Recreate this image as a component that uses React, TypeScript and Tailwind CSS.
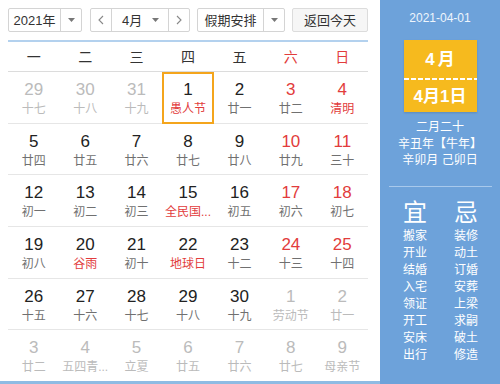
import React from "react";

type Cell = { d: string; l: string; other?: boolean; redNum?: boolean; redL?: boolean; sel?: boolean };

const rows: Cell[][] = [
  [
    { d: "29", l: "十七", other: true },
    { d: "30", l: "十八", other: true },
    { d: "31", l: "十九", other: true },
    { d: "1", l: "愚人节", redL: true, sel: true },
    { d: "2", l: "廿一" },
    { d: "3", l: "廿二", redNum: true },
    { d: "4", l: "清明", redNum: true, redL: true },
  ],
  [
    { d: "5", l: "廿四" },
    { d: "6", l: "廿五" },
    { d: "7", l: "廿六" },
    { d: "8", l: "廿七" },
    { d: "9", l: "廿八" },
    { d: "10", l: "廿九", redNum: true },
    { d: "11", l: "三十", redNum: true },
  ],
  [
    { d: "12", l: "初一" },
    { d: "13", l: "初二" },
    { d: "14", l: "初三" },
    { d: "15", l: "全民国...", redL: true },
    { d: "16", l: "初五" },
    { d: "17", l: "初六", redNum: true },
    { d: "18", l: "初七", redNum: true },
  ],
  [
    { d: "19", l: "初八" },
    { d: "20", l: "谷雨", redL: true },
    { d: "21", l: "初十" },
    { d: "22", l: "地球日", redL: true },
    { d: "23", l: "十二" },
    { d: "24", l: "十三", redNum: true },
    { d: "25", l: "十四", redNum: true },
  ],
  [
    { d: "26", l: "十五" },
    { d: "27", l: "十六" },
    { d: "28", l: "十七" },
    { d: "29", l: "十八" },
    { d: "30", l: "十九" },
    { d: "1", l: "劳动节", other: true },
    { d: "2", l: "廿一", other: true },
  ],
  [
    { d: "3", l: "廿二", other: true },
    { d: "4", l: "五四青...", other: true },
    { d: "5", l: "立夏", other: true },
    { d: "6", l: "廿五", other: true },
    { d: "7", l: "廿六", other: true },
    { d: "8", l: "廿七", other: true },
    { d: "9", l: "母亲节", other: true },
  ],
];

const Arrow = () => (
  <svg width="7" height="4" viewBox="0 0 7 4">
    <path d="M0 0H7L3.5 4Z" fill="#777" />
  </svg>
);

const Chev = ({ dir }: { dir: "l" | "r" }) => (
  <svg width="6" height="10" viewBox="0 0 6 10">
    <path d={dir === "l" ? "M5 1L1 5L5 9" : "M1 1L5 5L1 9"} stroke="#888" strokeWidth="1.1" fill="none" />
  </svg>
);

export default function App() {
  const yi = ["搬家", "开业", "结婚", "入宅", "领证", "开工", "安床", "出行"];
  const ji = ["装修", "动土", "订婚", "安葬", "上梁", "求嗣", "破土", "修造"];
  return (
    <div className="flex w-[500px] h-[384px] bg-white overflow-hidden font-['Liberation_Sans','Noto_Sans_CJK_SC',sans-serif]">
      <div className="w-[380px] h-[384px] flex flex-col pl-2 pr-3 pt-2 border-b-[3px] border-[#8fbbe3]">
        <div className="flex h-6 text-[13px] text-[#333] leading-none">
          <div className="w-[74px] flex border border-[#d4d4d4] rounded-[2px]">
            <div className="w-[52px] flex items-center justify-center border-r border-[#d4d4d4]">2021年</div>
            <div className="flex-1 flex items-center justify-center"><Arrow /></div>
          </div>
          <div className="ml-2 w-[100px] flex border border-[#d4d4d4] rounded-[2px]">
            <div className="w-[21px] flex items-center justify-center border-r border-[#d4d4d4]"><Chev dir="l" /></div>
            <div className="w-[57px] flex items-center justify-between pl-[10px] pr-[9px] border-r border-[#d4d4d4]">
              <span>4月</span>
              <Arrow />
            </div>
            <div className="flex-1 flex items-center justify-center"><Chev dir="r" /></div>
          </div>
          <div className="ml-[7px] w-[88px] flex border border-[#d4d4d4] rounded-[2px]">
            <div className="w-[66px] flex items-center justify-center border-r border-[#d4d4d4]">假期安排</div>
            <div className="flex-1 flex items-center justify-center"><Arrow /></div>
          </div>
          <div className="ml-[7px] w-[76px] flex items-center justify-center border border-[#dcdcdc] bg-[#f6f6f6] rounded-[2px]">返回今天</div>
        </div>
        <div className="mt-2 border-t-2 border-[#b3d1ee]" />
        <div className="grid grid-cols-7 h-[30px] border-b border-[#dcdcdc] text-[14px] leading-none items-center text-center">
          {["一", "二", "三", "四", "五", "六", "日"].map((w, i) => (
            <div key={w} className={i >= 5 ? "text-[#e23c3c]" : "text-[#333]"}>{w}</div>
          ))}
        </div>
        <div className="flex-1 flex flex-col">
          {rows.map((r, ri) => (
            <div key={ri} className={"flex-1 grid grid-cols-7 " + (ri < 5 ? "border-b border-[#e6e6e6]" : "")}>
              {r.map((c, ci) => {
                const numColor = c.other ? "text-[#bbbbbb]" : c.redNum ? "text-[#e23c3c]" : "text-[#222]";
                const lColor = c.other ? "text-[#bbbbbb]" : c.redL ? "text-[#e23c3c]" : "text-[#707070]";
                return (
                  <div
                    key={ci}
                    className={
                      "flex flex-col items-center " +
                      (c.sel ? "border-2 border-[#f4a51c] pt-[6px] -mb-px" : "pt-2")
                    }
                  >
                    <div className={"text-[17px] leading-[20px] " + numColor}>{c.d}</div>
                    <div className={"text-[12px] leading-4 mt-px whitespace-nowrap " + lColor}>{c.l}</div>
                  </div>
                );
              })}
            </div>
          ))}
        </div>
      </div>
      <div className="w-[120px] h-[384px] bg-[#6da2da] flex flex-col items-center pt-[10px] text-white">
        <div className="text-[12px] leading-4 text-[#eef5fc]">2021-04-01</div>
        <div className="mt-[14px] w-[73px] h-[72px] bg-[#f6ba1e] flex flex-col shadow-[0_1px_2px_rgba(0,0,0,0.15)]">
          <div className="h-[38px] flex items-center justify-center text-[17px] font-bold leading-none tracking-[3px] pl-[3px]">4月</div>
          <div className="h-[2px] bg-[repeating-linear-gradient(90deg,#ffffff_0px,#ffffff_5px,transparent_5px,transparent_7px)]" />
          <div className="flex-1 flex items-center justify-center text-[17px] font-bold leading-none">4月1日</div>
        </div>
        <div className="mt-[7px] text-[12px] leading-[16.5px] text-center">
          <div>二月二十</div>
          <div>辛丑年【牛年】</div>
          <div>辛卯月 己卯日</div>
        </div>
        <div className="mt-[17px] w-[103px] h-px bg-[#a8c9ec]" />
        <div className="mt-[12px] w-full flex pl-[15px] gap-[11px]">
          <div className="w-[40px] flex flex-col items-center">
            <div className="text-[24px] leading-[28px] mb-px">宜</div>
            {yi.map((t) => (
              <div key={t} className="text-[12px] leading-[17px]">{t}</div>
            ))}
          </div>
          <div className="w-[40px] flex flex-col items-center">
            <div className="text-[24px] leading-[28px] mb-px">忌</div>
            {ji.map((t) => (
              <div key={t} className="text-[12px] leading-[17px]">{t}</div>
            ))}
          </div>
        </div>
      </div>
    </div>
  );
}
